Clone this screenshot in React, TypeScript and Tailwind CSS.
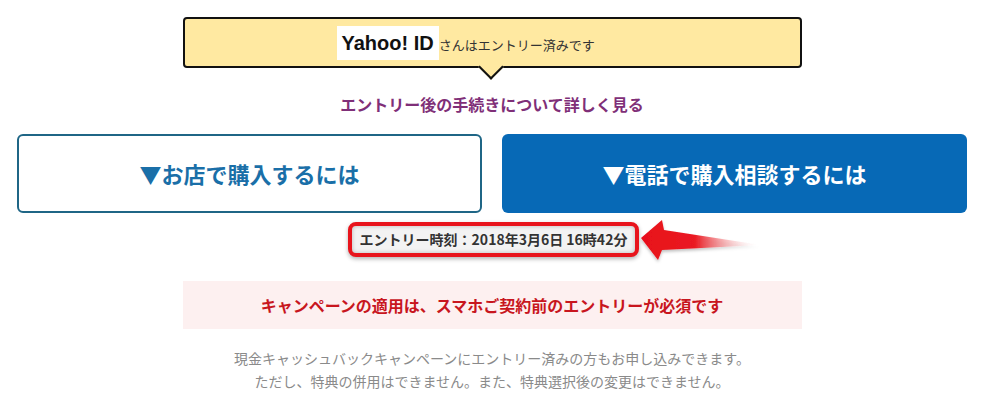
import React from 'react';

const jp = "font-['Noto_Sans_CJK_JP',sans-serif]";

const EntryArrow: React.FC = () => (
  <svg className="absolute left-full top-[-5px] ml-0" width="130" height="48" viewBox="0 0 130 48">
    <defs>
      <linearGradient id="arrowFade" x1="0" y1="0" x2="1" y2="0">
        <stop offset="0" stopColor="#e8101a" />
        <stop offset="0.45" stopColor="#ea1a22" />
        <stop offset="1" stopColor="#ffffff" stopOpacity="0" />
      </linearGradient>
      <filter id="arrowShadow" x="-10%" y="-20%" width="130%" height="150%">
        <feDropShadow dx="0" dy="2" stdDeviation="1.5" floodColor="#000" floodOpacity="0.25" />
      </filter>
    </defs>
    <path d="M2 21 L23 3 L25 13 L122 28 L23 33 L19 43 Z" fill="url(#arrowFade)" filter="url(#arrowShadow)" />
  </svg>
);

const App: React.FC = () => {
  return (
    <div className={`min-h-screen bg-white ${jp}`}>
      <div className="w-[950px] ml-[17px] pt-[17px]">
        {/* entry status bubble */}
        <div className="relative mx-auto w-[619px] h-[51px] bg-[#ffe9a1] border-2 border-[#111] rounded-[4px] flex items-center pl-[152px]">
          <span className="bg-white h-[34px] flex items-center px-[5px] font-['Liberation_Sans',sans-serif] font-bold text-[20px] text-[#111]">
            Yahoo! ID
          </span>
          <span className="text-[13px] text-[#333] mt-[5px]">さんはエントリー済みです</span>
          <div className="absolute left-[297px] bottom-[-10px] w-[18px] h-[18px] bg-[#ffe9a1] border-r-2 border-b-2 border-[#111] rotate-45"></div>
        </div>

        <div className="mt-[24px] text-center text-[16px] font-bold text-[#7f2f78] leading-[24px]">
          エントリー後の手続きについて詳しく見る
        </div>

        {/* purchase buttons */}
        <div className="mt-[18px] grid grid-cols-2 gap-[20px]">
          <div className="h-[79px] border-2 border-[#1f6686] rounded-[6px] flex items-center justify-center text-[22px] font-bold text-[#1a6fa8]">
            ▼お店で購入するには
          </div>
          <div className="h-[79px] bg-[#0769b6] rounded-[6px] flex items-center justify-center text-[22px] font-bold text-white">
            ▼電話で購入相談するには
          </div>
        </div>

        {/* entry time */}
        <div className="mt-[9px] flex justify-center">
          <div className="relative ml-[3px]">
            <div className="h-[35px] px-[8px] border-4 border-[#e8141c] rounded-[8px] bg-[#f3f3f3] shadow-[0_2px_4px_rgba(0,0,0,0.3),inset_0_0_4px_rgba(0,0,0,0.25)] flex items-center text-[14px] font-bold text-[#333]">
              エントリー時刻：2018年3月6日 16時42分
            </div>
            <EntryArrow />
          </div>
        </div>

        {/* notice */}
        <div className="mt-[24px] mx-auto w-[619px] h-[48px] bg-[#fdf0f0] flex items-center justify-center text-[16px] font-bold text-[#c8161e]">
          キャンペーンの適用は、スマホご契約前のエントリーが必須です
        </div>

        <div className="mt-[18px] text-center text-[14px] leading-[23px] text-[#8a8a8a]">
          <p>現金キャッシュバックキャンペーンにエントリー済みの方もお申し込みできます。</p>
          <p>ただし、特典の併用はできません。また、特典選択後の変更はできません。</p>
        </div>
      </div>
    </div>
  );
};

export default App;
